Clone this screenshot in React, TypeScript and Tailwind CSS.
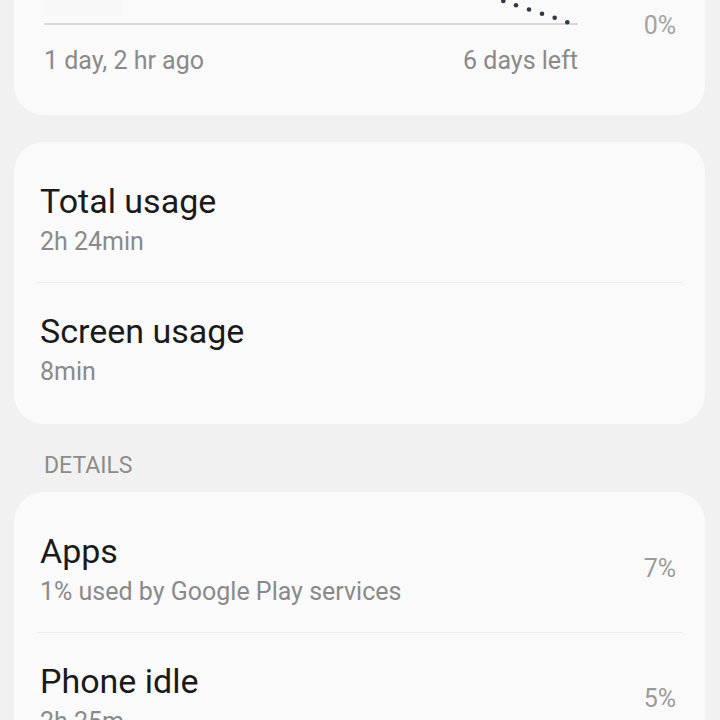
import React from "react";

const font = { fontFamily: "Roboto, 'Noto Sans', sans-serif" };

function Row({ title, sub, pct, divider }: { title: string; sub: string; pct?: string; divider?: boolean }) {
  return (
    <div>
      {divider && <div className="mx-[23px] h-px bg-[#ebebeb]" />}
      <div className={`flex items-center pl-[26px] pr-[29px] pb-[25px] ${divider ? "pt-[28px]" : "pt-[30px]"}`}>
        <div className="flex-1">
          <div className="text-[34px] leading-[40px] text-[#1a1a1a]">{title}</div>
          <div className="mt-[6px] text-[25px] leading-[30px] text-[#8a8a8a]">{sub}</div>
        </div>
        {pct && <div className="text-[25px] leading-[30px] text-[#9a9a9a]">{pct}</div>}
      </div>
    </div>
  );
}

export default function App() {
  const dots = [
    [503.3, 1],
    [516, 5.3],
    [529, 9.5],
    [542, 13.8],
    [554.7, 17.8],
    [567.3, 22.3],
  ];
  return (
    <div className="min-h-[720px] w-[720px] overflow-hidden bg-[#f1f1f1]" style={font}>
      {/* Card 1 (chart, top cut off) */}
      <div className="ml-[14px] flex w-[691px] rounded-b-[30px] bg-[#fafafa] pl-[30px] pr-[29px] pb-[39px]">
        <div className="w-[534px]">
          <svg width="534" height="26" viewBox="0 0 534 26" className="block">
            <rect x="0" y="0" width="78" height="16" fill="#f8f8f8" />
            <rect x="0" y="23" width="534" height="2" fill="#d8d8d8" />
            {dots.map(([x, y], i) => (
              <circle key={i} cx={x - 44} cy={y} r="2.3" fill="#303a44" />
            ))}
          </svg>
          <div className="mt-[20px] flex justify-between text-[25px] leading-[30px] text-[#8a8a8a]">
            <span>1 day, 2 hr ago</span>
            <span>6 days left</span>
          </div>
        </div>
        <div className="flex-1 pt-[11px] text-right text-[25px] leading-[30px] text-[#a3a3a3]">0%</div>
      </div>

      {/* Card 2 */}
      <div className="ml-[14px] mt-[27px] w-[691px] rounded-[30px] bg-[#fafafa] pt-[9px] pb-[12px]">
        <Row title="Total usage" sub="2h 24min" />
        <Row title="Screen usage" sub="8min" divider />
      </div>

      {/* Section header */}
      <div className="pl-[44px] pt-[28px] pb-[12px] text-[23px] leading-[28px] text-[#8c8c8c]">DETAILS</div>

      {/* Card 3 */}
      <div className="ml-[14px] w-[691px] rounded-[30px] bg-[#fafafa] pt-[9px] pb-[10px]">
        <Row title="Apps" sub="1% used by Google Play services" pct="7%" />
        <Row title="Phone idle" sub="2h 25m" pct="5%" divider />
      </div>
    </div>
  );
}
